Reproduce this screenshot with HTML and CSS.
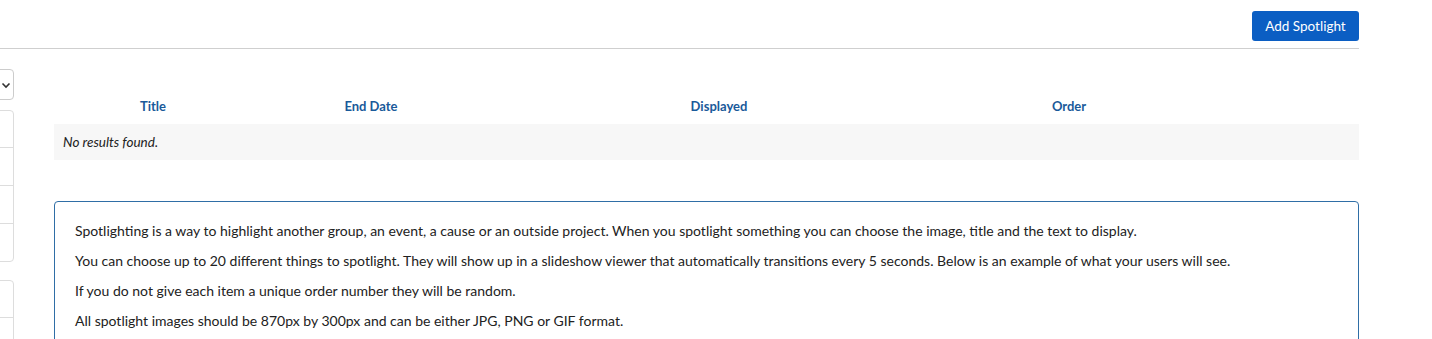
FILE: index.html
```html
<!DOCTYPE html>
<html lang="en">
<head>
  <meta charset="UTF-8">
  <meta name="viewport" content="width=device-width, initial-scale=1.0">
  <title>Spotlights</title>
  <link rel="stylesheet" href="styles.css">
</head>
<body>
  <div class="page">
    <!-- Top bar -->
    <div class="topbar">
      <button class="btn-primary" type="button">Add Spotlight</button>
    </div>

    <div class="layout">
      <!-- Sidebar (scrolled off to the left, only its right edge shows) -->
      <aside class="sidebar">
        <div class="select-box">
          <svg class="chevron" width="10" height="10" viewBox="0 0 10 10">
            <path d="M1.5 3.5 L5 7 L8.5 3.5" fill="none" stroke="#333" stroke-width="1.6"/>
          </svg>
        </div>
        <ul class="list-group">
          <li></li>
          <li></li>
          <li></li>
          <li></li>
        </ul>
        <ul class="list-group">
          <li></li>
          <li></li>
        </ul>
      </aside>

      <!-- Main content -->
      <main class="content">
        <table class="grid">
          <thead>
            <tr>
              <th class="col-title">Title</th>
              <th class="col-date">End Date</th>
              <th class="col-displayed">Displayed</th>
              <th class="col-order">Order</th>
              <th class="col-action"></th>
            </tr>
          </thead>
          <tbody>
            <tr class="empty-row">
              <td colspan="5">No results found.</td>
            </tr>
          </tbody>
        </table>

        <div class="info-box">
          <p>Spotlighting is a way to highlight another group, an event, a cause or an outside project. When you spotlight something you can choose the image, title and the text to display.</p>
          <p>You can choose up to 20 different things to spotlight. They will show up in a slideshow viewer that automatically transitions every 5 seconds. Below is an example of what your users will see.</p>
          <p>If you do not give each item a unique order number they will be random.</p>
          <p>All spotlight images should be 870px by 300px and can be either JPG, PNG or GIF format.</p>
        </div>
      </main>
    </div>
  </div>
</body>
</html>
```

FILE: styles.css
```css
body {
  font-family: Lato, "Open Sans", Arial, sans-serif;
  color: #222;
  margin: 0;
  padding: 0;
  background: #fff;
  overflow: hidden;
}
.page {
  padding-right: 73px;
}
.topbar {
  display: flex;
  justify-content: flex-end;
  align-items: flex-start;
  height: 49px;
  padding-top: 11px;
  box-sizing: border-box;
  border-bottom: 1px solid #cfcfcf;
}
.btn-primary {
  background-color: #0b5ec3;
  color: #fff;
  border: none;
  border-radius: 3px;
  font-family: inherit;
  font-size: 13.5px;
  height: 30px;
  width: 107px;
  padding: 0;
  cursor: pointer;
}
.layout {
  display: flex;
}
.sidebar {
  width: 200px;
  margin-left: -186px;
  flex-shrink: 0;
  padding-top: 20px;
}
.select-box {
  display: flex;
  align-items: center;
  justify-content: flex-end;
  height: 31px;
  box-sizing: border-box;
  border: 1px solid #ccc;
  border-radius: 4px;
  padding: 0 2px 0 10px;
}
.chevron {
  margin-top: 1px;
}
.list-group {
  list-style: none;
  margin: 10px 0 0;
  padding: 0;
  border: 1px solid #ddd;
  border-radius: 4px;
}
.list-group + .list-group {
  margin-top: 18px;
}
.list-group li {
  height: 37px;
  border-top: 1px solid #ddd;
}
.list-group li:first-child {
  border-top: none;
  height: 36px;
}
.content {
  flex: 1;
  margin-left: 40px;
  padding-top: 39px;
}
.grid {
  width: 100%;
  border-collapse: collapse;
  table-layout: fixed;
}
.grid th {
  height: 36px;
  padding: 0;
  font-size: 13px;
  font-weight: bold;
  color: #1a5a9a;
  text-align: center;
}
.col-title { width: 198px; }
.col-date { width: 238px; }
.col-displayed { width: 458px; }
.col-order { width: 242px; }
.empty-row td {
  background-color: #f7f7f7;
  height: 36px;
  padding: 0 9px;
  font-size: 13.5px;
  font-style: italic;
  color: #222;
}
.info-box {
  margin-top: 41px;
  border: 1px solid #2f6ea6;
  border-radius: 4px;
  padding: 19px 20px 10px;
  height: 200px;
}
.info-box p {
  margin: 0 0 10px;
  font-size: 14px;
  line-height: 20px;
}
```
